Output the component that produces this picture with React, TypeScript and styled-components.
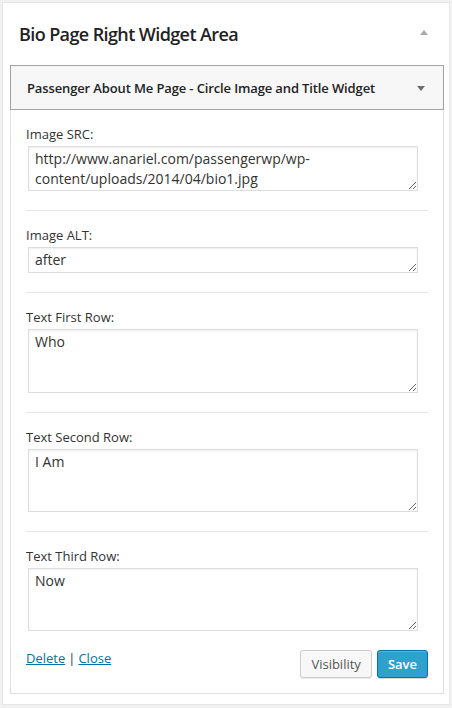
import * as React from "react"
import styled, {createGlobalStyle} from "styled-components"

const GlobalStyle = createGlobalStyle`
  html, body {
    margin: 0;
    padding: 0;
    background: #f1f1f1;
  }
  body {
    font-family: "Open Sans", "Liberation Sans", sans-serif;
    color: #333;
  }
`

type FieldData = {
    label: string
    value: string
    height: number
}

const fields: FieldData[] = [
    {label: "Image SRC:", value: "http://www.anariel.com/passengerwp/wp-content/uploads/2014/04/bio1.jpg", height: 45},
    {label: "Image ALT:", value: "after", height: 26},
    {label: "Text First Row:", value: "Who", height: 64},
    {label: "Text Second Row:", value: "I Am", height: 63},
    {label: "Text Third Row:", value: "Now", height: 63},
]

export default function App() {
    return (
        <>
            <GlobalStyle />
            <SidebarBox>
                <SidebarHeader>
                    <SidebarTitle>Bio Page Right Widget Area</SidebarTitle>
                    <Arrow $up />
                </SidebarHeader>

                <Widget>
                    <WidgetTop>
                        <WidgetTitle>Passenger About Me Page - Circle Image and Title Widget</WidgetTitle>
                        <Arrow />
                    </WidgetTop>

                    <WidgetInside>
                        {fields.map((field, i) => (
                            <React.Fragment key={field.label}>
                                {i > 0 && <Separator />}
                                <Field>
                                    <Label>{field.label}</Label>
                                    <TextArea defaultValue={field.value} style={{height: field.height}} />
                                </Field>
                            </React.Fragment>
                        ))}

                        <Controls>
                            <Links>
                                <LinkText href="#">Delete</LinkText>
                                <Pipe>|</Pipe>
                                <LinkText href="#">Close</LinkText>
                            </Links>
                            <Buttons>
                                <Button type="button">Visibility</Button>
                                <Button type="button" $primary>Save</Button>
                            </Buttons>
                        </Controls>
                    </WidgetInside>
                </Widget>
            </SidebarBox>
        </>
    )
}

const SidebarBox = styled("div")`
  margin: 2px 0 0 2px;
  width: 448px;
  box-sizing: border-box;
  background: #fff;
  border: 1px solid #e5e5e5;
  padding-bottom: 10px;
`

const SidebarHeader = styled("div")`
  height: 62px;
  display: flex;
  align-items: center;
  justify-content: space-between;
  padding: 0 21px 0 16px;
  box-sizing: border-box;
`

const SidebarTitle = styled("h3")`
  margin: 0;
  font-size: 18px;
  font-weight: 600;
  letter-spacing: -0.6px;
  color: #222;
  line-height: 24px;
`

const Arrow = styled("span")<{$up?: boolean}>`
  width: 0;
  height: 0;
  border-left: 4px solid transparent;
  border-right: 4px solid transparent;
  ${p => p.$up
        ? "border-bottom: 5px solid #aaa; margin-top: -3px;"
        : "border-top: 5px solid #6f6f6f; margin-top: 2px;"}
`

const Widget = styled("div")`
  margin: 0 5px 0 7px;
`

const WidgetTop = styled("div")`
  height: 45px;
  box-sizing: border-box;
  background: #f7f7f7;
  border: 1px solid #a3a3a3;
  display: flex;
  align-items: center;
  justify-content: space-between;
  padding: 0 18px 0 16px;
`

const WidgetTitle = styled("h4")`
  margin: 0;
  font-size: 13px;
  font-weight: 600;
  letter-spacing: -0.13px;
  color: #222;
  line-height: 18px;
`

const WidgetInside = styled("div")`
  border: 1px solid #dfdfdf;
  border-top: none;
  padding: 15px 15px 15px 15px;
`

const Field = styled("div")`
  display: flex;
  flex-direction: column;
`

const Label = styled("label")`
  font-size: 13px;
  line-height: 18px;
  color: #333;
`

const TextArea = styled("textarea")`
  margin: 3px 0 0 2px;
  width: 390px;
  box-sizing: border-box;
  padding: 2px 6px;
  font-family: "Open Sans", "Liberation Sans", sans-serif;
  font-size: 14px;
  line-height: 20px;
  color: #333;
  background: #fff;
  border: 1px solid #ddd;
  box-shadow: inset 0 1px 2px rgba(0, 0, 0, 0.07);
  outline: none;
  overflow: hidden;
  resize: vertical;
`

const Separator = styled("hr")`
  margin: 19px 0 15px 0;
  border: none;
  border-top: 1px solid #e5e5e5;
  height: 0;
`

const Controls = styled("div")`
  margin-top: 19px;
  display: flex;
  justify-content: space-between;
  align-items: flex-start;
`

const Links = styled("div")`
  font-size: 13px;
  line-height: 18px;
  margin-top: -1px;
  display: flex;
  gap: 3px;
`

const LinkText = styled("a")`
  color: #0074a2;
  text-decoration: underline;
`

const Pipe = styled("span")`
  color: #333;
`

const Buttons = styled("div")`
  display: flex;
  gap: 5px;
`

const Button = styled("button")<{$primary?: boolean}>`
  height: 28px;
  padding: 0 10px 1px;
  border-radius: 3px;
  font-family: "Open Sans", "Liberation Sans", sans-serif;
  font-size: 13px;
  line-height: 26px;
  cursor: pointer;
  background: ${p => p.$primary ? "#2ea2cc" : "#f7f7f7"};
  border: 1px solid ${p => p.$primary ? "#0074a2" : "#ccc"};
  color: ${p => p.$primary ? "#fff" : "#555"};
  font-weight: ${p => p.$primary ? 600 : 400};
  box-shadow: ${p => p.$primary
        ? "inset 0 1px 0 rgba(120, 200, 230, 0.5), 0 1px 0 rgba(0, 0, 0, 0.15)"
        : "inset 0 1px 0 #fff, 0 1px 0 rgba(0, 0, 0, 0.08)"};
`
